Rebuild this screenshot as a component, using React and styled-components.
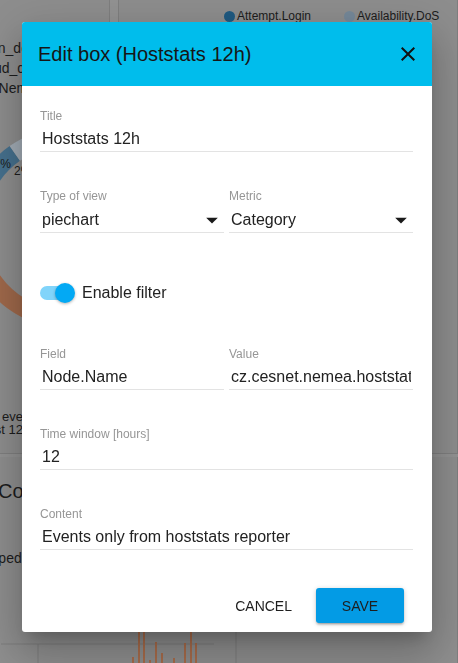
import React from 'react'
import styled, { createGlobalStyle } from 'styled-components'

const GlobalStyle = createGlobalStyle`
	html, body {
		margin: 0;
		padding: 0;
		height: 100%;
		overflow: hidden;
	}
	body {
		font-family: "Liberation Sans", Arial, sans-serif;
		background: #8c8c8c;
	}
	#root {
		height: 100%;
	}
`

const legendTop = ['scan_detector', 'cloud_detector', 'dosNemea']
const bars = [
	[131, 657], [137, 600], [142, 600], [148, 660], [154, 642],
	[160, 653], [172, 658], [183, 643], [189, 600], [194, 643],
]

// small helper for donut slices
const arc = (a0, a1, R = 100, r = 82) => {
	const p = (ang, rad) => {
		const t = (ang * Math.PI) / 180
		return `${100 + rad * Math.cos(t)} ${100 + rad * Math.sin(t)}`
	}
	const large = a1 - a0 > 180 ? 1 : 0
	return `M${p(a0, R)} A${R} ${R} 0 ${large} 1 ${p(a1, R)} L${p(a1, r)} A${r} ${r} 0 ${large} 0 ${p(a0, r)}Z`
}

function Backdrop() {
	return (
		<Dashboard>
			<Card>
				<Legend>
					{legendTop.map(l => (
						<LegendLine key={l}>{l}</LegendLine>
					))}
				</Legend>
				<Donut width="200" height="200" viewBox="0 0 200 200">
					<path d={arc(95, 180)} fill="#a0694b" />
					<path d={arc(180, 235)} fill="#46718e" />
					<path d={arc(235, 250)} fill="#a3adb7" />
					<path d={arc(250, 360)} fill="#5f7f96" />
					<path d={arc(0, 95)} fill="#7b8c99" />
					<text x="44" y="40" fontSize="12" textAnchor="end" fill="#1c1c1c">17%</text>
					<text x="47" y="47" fontSize="12" fill="#1c1c1c">2%</text>
				</Donut>
				<Caption>
					Total events
					<br />
					in last 12 hours
				</Caption>
			</Card>
			<Card>
				<SeriesRow>
					<Series>
						<Dot $color="#1f5a82" />
						Attempt.Login
					</Series>
					<Series>
						<Dot $color="#76899a" />
						Availability.DoS
					</Series>
				</SeriesRow>
			</Card>
			<Card $wide>
				<CardTitle>Count of events</CardTitle>
				<Note>Dropped</Note>
				<Chart width="600" height="100">
					<line x1="40" y1="44" x2="253" y2="44" stroke="#7c7c7c" />
					<line x1="77" y1="44" x2="77" y2="100" stroke="#7c7c7c" />
					<line x1="275" y1="0" x2="275" y2="100" stroke="#7c7c7c" />
					{bars.map(([x, y]) => (
						<rect key={x} x={x + 40} y={y - 600} width="2" height="100" fill="#a86c4b" />
					))}
				</Chart>
			</Card>
		</Dashboard>
	)
}

export default function App() {
	return (
		<>
			<GlobalStyle />
			<Backdrop />
			<Overlay>
				<Dialog>
					<Header>
						<h2>Edit box (Hoststats 12h)</h2>
						<CloseButton aria-label="close">
							<svg width="24" height="24" viewBox="0 0 24 24">
								<path
									fill="#111"
									d="M19 6.41L17.59 5 12 10.59 6.41 5 5 6.41 10.59 12 5 17.59 6.41 19 12 13.41 17.59 19 19 17.59 13.41 12z"
								/>
							</svg>
						</CloseButton>
					</Header>
					<Body>
						<Field>
							<Label>Title</Label>
							<TextInput readOnly defaultValue="Hoststats 12h" />
						</Field>
						<Row>
							<Field>
								<Label>Type of view</Label>
								<Select>
									piechart
									<Arrow />
								</Select>
							</Field>
							<Field>
								<Label>Metric</Label>
								<Select>
									Category
									<Arrow />
								</Select>
							</Field>
						</Row>
						<ToggleRow>
							<Track>
								<Thumb />
							</Track>
							Enable filter
						</ToggleRow>
						<Row>
							<Field>
								<Label>Field</Label>
								<TextInput readOnly defaultValue="Node.Name" />
							</Field>
							<Field>
								<Label>Value</Label>
								<TextInput readOnly defaultValue="cz.cesnet.nemea.hoststats" />
							</Field>
						</Row>
						<Field>
							<Label>Time window [hours]</Label>
							<TextInput readOnly defaultValue="12" />
						</Field>
						<Field>
							<Label>Content</Label>
							<TextInput readOnly defaultValue="Events only from hoststats reporter" />
						</Field>
					</Body>
					<Actions>
						<Button>Cancel</Button>
						<Button $primary>Save</Button>
					</Actions>
				</Dialog>
			</Overlay>
		</>
	)
}

function Arrow() {
	return (
		<ArrowIcon width="28" height="28" viewBox="0 0 24 24">
			<path d="M7 10l5 5 5-5z" fill="#1a1a1a" />
		</ArrowIcon>
	)
}

/* dimmed dashboard behind the modal */
const Dashboard = styled.div`
	display: grid;
	grid-template-columns: 150px 1fr;
	grid-template-rows: 454px auto;
	column-gap: 8px;
	row-gap: 3px;
	margin-left: -40px;
	height: 100%;
	background: #939393;
`
const Card = styled.section`
	grid-column: ${p => (p.$wide ? '1 / -1' : 'auto')};
	background: #8e8e8e;
	border: 1px solid #7f7f7f;
	border-top: 0;
	color: #1c1c1c;
	font-size: 14px;
	overflow: visible;
	min-width: 0;
`
const Legend = styled.div`
	padding: 38px 0 0 15px;
`
const LegendLine = styled.div`
	line-height: 20px;
	white-space: nowrap;
`
const Donut = styled.svg`
	display: block;
	margin: 30px 0 0 6px;
`
const Caption = styled.div`
	margin: 82px 0 0 10px;
	font-size: 13px;
	line-height: 13px;
	white-space: nowrap;
`
const SeriesRow = styled.div`
	display: flex;
	gap: 33px;
	padding: 10px 0 0 105px;
	font-size: 12px;
	line-height: 12px;
	white-space: nowrap;
`
const Series = styled.span`
	display: flex;
	align-items: center;
	gap: 2px;
`
const Dot = styled.i`
	width: 11px;
	height: 11px;
	border-radius: 50%;
	background: ${p => p.$color};
`
const CardTitle = styled.div`
	padding: 22px 0 0 37px;
	font-size: 20px;
	line-height: 24px;
	white-space: nowrap;
`
const Note = styled.div`
	margin: 47px 0 0 7px;
	line-height: 16px;
`
const Chart = styled.svg`
	display: block;
	margin-top: 34px;
`

/* modal */
const Overlay = styled.div`
	position: fixed;
	inset: 0;
	display: flex;
	align-items: flex-start;
	padding: 22px 0 0 22px;
`
const Dialog = styled.div`
	width: 410px;
	background: #fff;
	border-radius: 3px;
	overflow: hidden;
	box-shadow: 0 11px 15px -7px rgba(0, 0, 0, 0.2), 0 24px 38px 3px rgba(0, 0, 0, 0.14),
		0 9px 46px 8px rgba(0, 0, 0, 0.12);
`
const Header = styled.div`
	height: 64px;
	display: flex;
	align-items: center;
	justify-content: space-between;
	padding: 0 16px;
	background: #00bdec;
	h2 {
		margin: 0;
		font-size: 20px;
		font-weight: 400;
		color: #161616;
	}
`
const CloseButton = styled.button`
	display: flex;
	padding: 0;
	margin-right: -4px;
	border: 0;
	background: none;
	cursor: pointer;
`
const Body = styled.div`
	display: flex;
	flex-direction: column;
	gap: 37px;
	padding: 23px 19px 0 18px;
`
const Row = styled.div`
	display: grid;
	grid-template-columns: 1fr 1fr;
	column-gap: 5px;
`
const Field = styled.label`
	display: flex;
	flex-direction: column;
	min-width: 0;
`
const Label = styled.span`
	font-size: 12px;
	line-height: 14px;
	color: #969696;
	margin-bottom: 4px;
`
const TextInput = styled.input`
	height: 25px;
	width: 100%;
	box-sizing: border-box;
	padding: 0 2px;
	border: 0;
	border-bottom: 1px solid #e3e3e3;
	background: transparent;
	outline: none;
	font-family: "Liberation Sans", Arial, sans-serif;
	font-size: 16px;
	color: #222;
`
const Select = styled.div`
	height: 26px;
	box-sizing: border-box;
	display: flex;
	align-items: center;
	padding-left: 2px;
	border-bottom: 1px solid #e3e3e3;
	font-size: 16px;
	color: #222;
`
const ArrowIcon = styled.svg`
	margin: 0 -2px 0 auto;
`
const ToggleRow = styled.div`
	display: flex;
	align-items: center;
	height: 24px;
	margin: 11px 0 5px;
	font-size: 16px;
	color: #222;
`
const Track = styled.span`
	position: relative;
	width: 34px;
	height: 14px;
	border-radius: 7px;
	background: #81d4fa;
	margin-right: 8px;
`
const Thumb = styled.span`
	position: absolute;
	top: -3px;
	right: -1px;
	width: 20px;
	height: 20px;
	border-radius: 50%;
	background: #03a9f4;
	box-shadow: 0 1px 3px rgba(0, 0, 0, 0.3);
`
const Actions = styled.div`
	display: flex;
	justify-content: flex-end;
	gap: 8px;
	padding: 38px 28px 9px 0;
`
const Button = styled.button`
	height: 35px;
	min-width: 88px;
	padding: 0 16px;
	border: 0;
	border-radius: 3px;
	font-family: "Liberation Sans", Arial, sans-serif;
	font-size: 14px;
	text-transform: uppercase;
	color: #1e1e1e;
	background: ${p => (p.$primary ? '#039be5' : 'transparent')};
	box-shadow: ${p =>
		p.$primary
			? '0 1px 5px rgba(0,0,0,.2), 0 2px 2px rgba(0,0,0,.14), 0 3px 1px -2px rgba(0,0,0,.12)'
			: 'none'};
	cursor: pointer;
`
